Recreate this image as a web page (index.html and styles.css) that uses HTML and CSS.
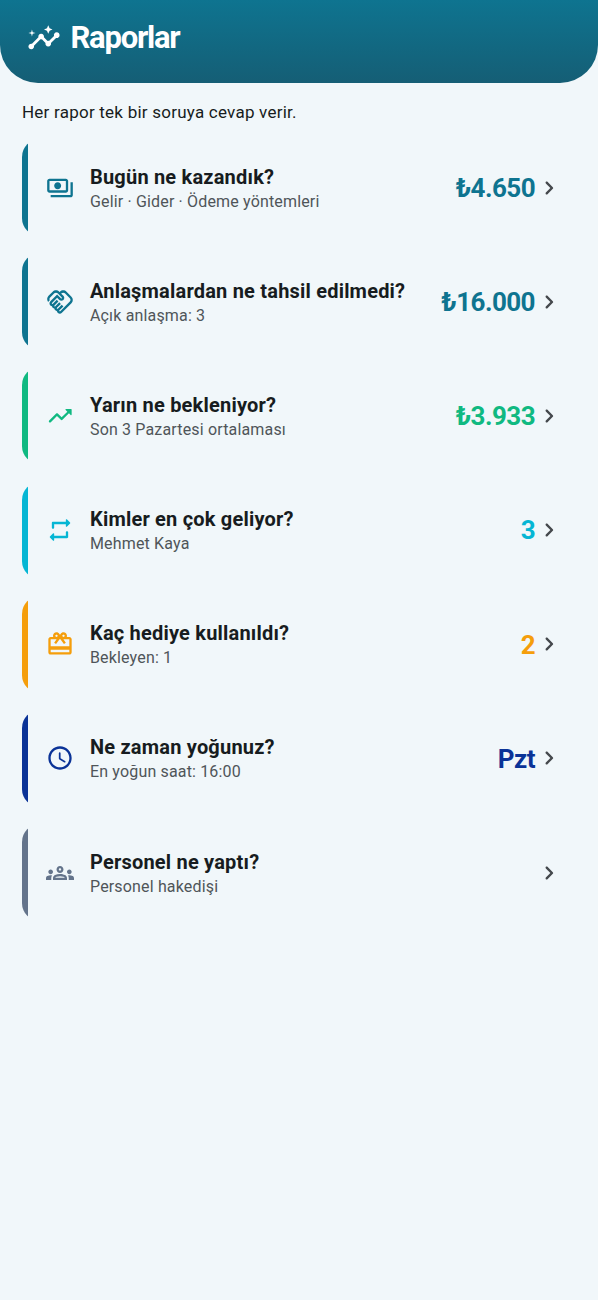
FILE: index.html
```html
<!DOCTYPE html>
<html lang="tr">
<head>
<meta charset="utf-8">
<title>Raporlar</title>
<link rel="stylesheet" href="styles.css">
</head>
<body>
<svg width="0" height="0" class="defs">
  <symbol id="chevron" viewBox="0 0 24 24"><path d="M9.29 6.71c-.39.39-.39 1.02 0 1.41L13.17 12l-3.88 3.88c-.39.39-.39 1.02 0 1.41.39.39 1.02.39 1.41 0l4.59-4.59c.39-.39.39-1.02 0-1.41L10.7 6.7c-.38-.38-1.02-.38-1.41.01z"/></symbol>
</svg>
<header class="header">
  <svg class="header-icon" viewBox="0 0 24 24"><path d="M21 8c-1.45 0-2.26 1.44-1.93 2.51l-3.55 3.56c-.3-.09-.74-.09-1.04 0l-2.55-2.55C12.27 10.45 11.46 9 10 9c-1.45 0-2.27 1.44-1.93 2.52l-4.56 4.55C2.44 15.74 1 16.55 1 18c0 1.1.9 2 2 2 1.45 0 2.26-1.44 1.93-2.51l4.55-4.56c.3.09.74.09 1.04 0l2.55 2.55C12.73 16.55 13.54 18 15 18c1.45 0 2.27-1.44 1.93-2.52l3.56-3.55c1.07.33 2.51-.48 2.51-1.93 0-1.1-.9-2-2-2z"/><path d="M15 9l.94-2.07L18 6l-2.06-.93L15 3l-.92 2.07L12 6l2.08.93zM3.5 11L4 9l2-.5L4 8l-.5-2L3 8l-2 .5L3 9z"/></svg>
  <h1 class="header-title">Raporlar</h1>
</header>
<main class="content">
  <p class="intro">Her rapor tek bir soruya cevap verir.</p>
  <div class="list">
    <div class="card teal">
      <svg class="icon" viewBox="0 0 24 24"><path d="M19 14V6c0-1.1-.9-2-2-2H3c-1.1 0-2 .9-2 2v8c0 1.1.9 2 2 2h14c1.1 0 2-.9 2-2zm-2 0H3V6h14v8zm-7-7c-1.66 0-3 1.34-3 3s1.34 3 3 3 3-1.34 3-3-1.34-3-3-3zm13 0v11c0 1.1-.9 2-2 2H4v-2h17V7h2z"/></svg>
      <div class="text"><h2 class="title">Bugün ne kazandık?</h2><p class="sub">Gelir · Gider · Ödeme yöntemleri</p></div>
      <span class="value">₺4.650</span>
      <svg class="chevron"><use href="#chevron"/></svg>
    </div>
    <div class="card teal">
      <svg class="icon" viewBox="0 0 24 24"><path d="M12.22 19.85c-.18.18-.5.21-.71 0-.18-.18-.21-.5 0-.71l3.39-3.39-1.41-1.41-3.39 3.39c-.19.2-.51.19-.71 0-.21-.21-.18-.53 0-.71l3.39-3.39-1.41-1.41-3.39 3.39c-.18.18-.5.21-.71 0-.19-.19-.19-.51 0-.71l3.39-3.39-1.42-1.41-3.39 3.39c-.18.18-.5.21-.71 0-.19-.2-.19-.51 0-.71L9.52 8.4l1.87 1.86c.95.95 2.59.94 3.54 0 .98-.98.98-2.56 0-3.54l-1.86-1.86.28-.28c.78-.78 2.05-.78 2.83 0l4.24 4.24c.78.78.78 2.05 0 2.83l-8.2 8.2zm9.61-6.78c1.56-1.56 1.56-4.09 0-5.66l-4.24-4.24c-1.56-1.56-4.09-1.56-5.66 0l-.28.28-.28-.28c-1.56-1.56-4.09-1.56-5.66 0L2.17 6.71c-1.42 1.42-1.55 3.63-.4 5.19l1.45-1.45c-.39-.75-.26-1.7.37-2.33l3.54-3.54c.78-.78 2.05-.78 2.83 0l3.56 3.56c.18.18.21.5 0 .71-.21.21-.53.18-.71 0L9.52 5.57l-5.8 5.79c-.98.97-.98 2.56 0 3.54.39.39.89.63 1.42.7.07.52.3 1.02.7 1.42.4.4.9.63 1.42.7.07.52.3 1.02.7 1.42.4.4.9.63 1.42.7.07.54.31 1.03.7 1.42.47.47 1.1.73 1.77.73.67 0 1.3-.26 1.77-.73l8.21-8.19z"/></svg>
      <div class="text"><h2 class="title">Anlaşmalardan ne tahsil edilmedi?</h2><p class="sub">Açık anlaşma: 3</p></div>
      <span class="value">₺16.000</span>
      <svg class="chevron"><use href="#chevron"/></svg>
    </div>
    <div class="card green">
      <svg class="icon" viewBox="0 0 24 24"><path d="M16.85 6.85l1.44 1.44-4.88 4.88-3.29-3.29c-.39-.39-1.02-.39-1.41 0l-6 6.01c-.39.39-.39 1.02 0 1.41.39.39 1.02.39 1.41 0L9.41 12l3.29 3.29c.39.39 1.02.39 1.41 0l5.59-5.58 1.44 1.44c.31.31.85.09.85-.35V6.5c.01-.28-.21-.5-.49-.5h-4.29c-.45 0-.67.54-.36.85z"/></svg>
      <div class="text"><h2 class="title">Yarın ne bekleniyor?</h2><p class="sub">Son 3 Pazartesi ortalaması</p></div>
      <span class="value">₺3.933</span>
      <svg class="chevron"><use href="#chevron"/></svg>
    </div>
    <div class="card cyan">
      <svg class="icon" viewBox="0 0 24 24"><path d="M7 7h10v1.79c0 .45.54.67.85.35l2.79-2.79c.2-.2.2-.51 0-.71l-2.79-2.79c-.31-.31-.85-.09-.85.36V5H6c-.55 0-1 .45-1 1v4c0 .55.45 1 1 1s1-.45 1-1V7zm10 10H7v-1.79c0-.45-.54-.67-.85-.35l-2.79 2.79c-.2.2-.2.51 0 .71l2.79 2.79c.31.31.85.09.85-.36V19h11c.55 0 1-.45 1-1v-4c0-.55-.45-1-1-1s-1 .45-1 1v3z"/></svg>
      <div class="text"><h2 class="title">Kimler en çok geliyor?</h2><p class="sub">Mehmet Kaya</p></div>
      <span class="value">3</span>
      <svg class="chevron"><use href="#chevron"/></svg>
    </div>
    <div class="card amber">
      <svg class="icon" viewBox="0 0 24 24"><path d="M20 6h-2.18c.11-.31.18-.65.18-1 0-1.66-1.34-3-3-3-1.05 0-1.96.54-2.5 1.35l-.5.67-.5-.68C10.96 2.54 10.05 2 9 2 7.34 2 6 3.34 6 5c0 .35.07.69.18 1H4c-1.11 0-1.99.89-1.99 2L2 19c0 1.11.89 2 2 2h16c1.11 0 2-.89 2-2V8c0-1.11-.89-2-2-2zm-5-2c.55 0 1 .45 1 1s-.45 1-1 1-1-.45-1-1 .45-1 1-1zM9 4c.55 0 1 .45 1 1s-.45 1-1 1-1-.45-1-1 .45-1 1-1zm11 15H4v-2h16v2zm0-5H4V8h5.08L7 10.83 8.62 12 11 8.76l1-1.36 1 1.36L15.38 12 17 10.83 14.92 8H20v6z"/></svg>
      <div class="text"><h2 class="title">Kaç hediye kullanıldı?</h2><p class="sub">Bekleyen: 1</p></div>
      <span class="value">2</span>
      <svg class="chevron"><use href="#chevron"/></svg>
    </div>
    <div class="card navy">
      <svg class="icon" viewBox="0 0 24 24"><path d="M11.99 2C6.47 2 2 6.48 2 12s4.47 10 9.99 10C17.52 22 22 17.52 22 12S17.52 2 11.99 2zM12 20c-4.42 0-8-3.58-8-8s3.58-8 8-8 8 3.58 8 8-3.58 8-8 8zm-.22-13h-.06c-.4 0-.72.32-.72.72v4.72c0 .35.18.68.49.86l4.15 2.49c.34.2.78.1.98-.24.21-.34.1-.79-.25-.99l-3.87-2.3V7.72c0-.4-.32-.72-.72-.72z"/></svg>
      <div class="text"><h2 class="title">Ne zaman yoğunuz?</h2><p class="sub">En yoğun saat: 16:00</p></div>
      <span class="value">Pzt</span>
      <svg class="chevron"><use href="#chevron"/></svg>
    </div>
    <div class="card slate">
      <svg class="icon" viewBox="0 0 24 24"><path d="M4 13c1.1 0 2-.9 2-2s-.9-2-2-2-2 .9-2 2 .9 2 2 2zm1.13 1.1c-.37-.06-.74-.1-1.13-.1-.99 0-1.93.21-2.78.58C.48 14.9 0 15.62 0 16.43V18h4.5v-1.61c0-.83.23-1.61.63-2.29zM20 13c1.1 0 2-.9 2-2s-.9-2-2-2-2 .9-2 2 .9 2 2 2zm4 3.43c0-.81-.48-1.53-1.22-1.85-.85-.37-1.79-.58-2.78-.58-.39 0-.76.04-1.13.1.4.68.63 1.46.63 2.29V18H24v-1.57zm-7.76-2.78c-1.17-.52-2.61-.9-4.24-.9-1.63 0-3.07.39-4.24.9C6.68 14.13 6 15.21 6 16.39V18h12v-1.61c0-1.18-.68-2.26-1.76-2.74zM8.07 16c.09-.23.13-.39.91-.69.97-.38 1.99-.56 3.02-.56s2.05.18 3.02.56c.77.3.81.46.91.69H8.07zM12 8c.55 0 1 .45 1 1s-.45 1-1 1-1-.45-1-1 .45-1 1-1m0-2c-1.66 0-3 1.34-3 3s1.34 3 3 3 3-1.34 3-3-1.34-3-3-3z"/></svg>
      <div class="text"><h2 class="title">Personel ne yaptı?</h2><p class="sub">Personel hakedişi</p></div>
      <svg class="chevron"><use href="#chevron"/></svg>
    </div>
  </div>
</main>
</body>
</html>
```
FILE: styles.css
```css
* { box-sizing: border-box; margin: 0; }
body { min-height: 1300px; background: #f1f7fa; color: #171c20; font-family: Roboto, "Liberation Sans", sans-serif; }
svg { display: block; flex: none; fill: currentColor; }
.defs { position: absolute; }
.header { display: flex; align-items: center; gap: 10px; height: 83px; padding: 0 26.5px 8px; border-radius: 0 0 38px 38px; background: linear-gradient(#0e7490, #155e75); color: #fff; }
.header-icon { width: 34px; height: 34px; }
.header-title { font-size: 31px; line-height: 36px; font-weight: 700; letter-spacing: -1.25px; }
.content { padding: 17.4px 22px 0; }
.intro { font-size: 17px; line-height: 24px; letter-spacing: 0.23px; }
.list { display: flex; flex-direction: column; gap: 17.15px; padding-top: 14.8px; }
.card { display: flex; align-items: center; height: 97px; padding-right: 13px; border-radius: 18px; overflow: hidden; }
.card::before { content: ""; align-self: stretch; width: 5.7px; margin-right: 18.3px; background: currentColor; }
.icon { width: 28px; height: 28px; }
.text { flex: 1; margin-left: 16px; padding-top: 3px; white-space: nowrap; }
.title { color: #171c20; font-size: 20px; line-height: 25px; font-weight: 700; letter-spacing: 0.2px; }
.sub { color: #4f5559; font-size: 16px; line-height: 24px; letter-spacing: 0.16px; }
.value { padding-top: 0.6px; font-size: 26px; line-height: 32px; font-weight: 700; letter-spacing: -0.55px; }
.chevron { width: 28px; height: 28px; color: #45494d; }
.teal { color: #0e7490; }
.green { color: #10b981; }
.cyan { color: #06b6d4; }
.amber { color: #f59e0b; }
.navy { color: #0b3397; }
.slate { color: #64748b; }
```
